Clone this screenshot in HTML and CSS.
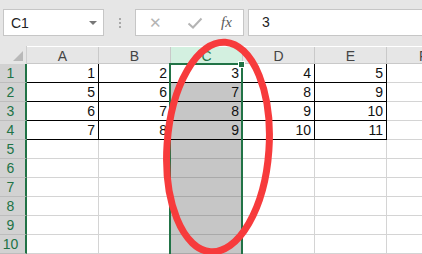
FILE: index.html
```html
<!DOCTYPE html>
<html lang="en">
<head>
    <meta charset="UTF-8">
    <title>Sheet</title>
    <link rel="stylesheet" href="styles.css">
</head>
<body>
    <div class="app">
        <!-- barra de fórmulas -->
        <div class="toolbar">
            <div class="namebox">
                <span>C1</span>
                <span class="arrow"></span>
            </div>
            <div class="dots"><i></i><i></i><i></i></div>
            <div class="fxbox">
                <span class="ico cancel">&#x2715;</span>
                <svg class="ico check" width="16" height="12" viewBox="0 0 16 12"><path d="M1.5 6.5 L6 10.5 L14.5 1.5" fill="none" stroke="#b4b4b4" stroke-width="2"/></svg>
                <span class="ico fx">fx</span>
            </div>
            <div class="formula">3</div>
        </div>

        <div class="sheet">
            <div class="corner"><span class="tri"></span></div>
            <div class="colhead">A</div>
            <div class="colhead">B</div>
            <div class="colhead sel">C</div>
            <div class="colhead">D</div>
            <div class="colhead">E</div>
            <div class="colhead last">F</div>

            <div class="rowhead">1</div>
            <div class="cell b">1</div><div class="cell b">2</div><div class="cell b">3</div><div class="cell b">4</div><div class="cell b">5</div><div class="cell"></div>
            <div class="rowhead">2</div>
            <div class="cell b">5</div><div class="cell b">6</div><div class="cell b g">7</div><div class="cell b">8</div><div class="cell b">9</div><div class="cell"></div>
            <div class="rowhead">3</div>
            <div class="cell b">6</div><div class="cell b">7</div><div class="cell b g">8</div><div class="cell b">9</div><div class="cell b">10</div><div class="cell"></div>
            <div class="rowhead">4</div>
            <div class="cell b">7</div><div class="cell b">8</div><div class="cell b g">9</div><div class="cell b">10</div><div class="cell b">11</div><div class="cell"></div>
            <div class="rowhead">5</div>
            <div class="cell"></div><div class="cell"></div><div class="cell g"></div><div class="cell"></div><div class="cell"></div><div class="cell"></div>
            <div class="rowhead">6</div>
            <div class="cell"></div><div class="cell"></div><div class="cell g"></div><div class="cell"></div><div class="cell"></div><div class="cell"></div>
            <div class="rowhead">7</div>
            <div class="cell"></div><div class="cell"></div><div class="cell g"></div><div class="cell"></div><div class="cell"></div><div class="cell"></div>
            <div class="rowhead">8</div>
            <div class="cell"></div><div class="cell"></div><div class="cell g"></div><div class="cell"></div><div class="cell"></div><div class="cell"></div>
            <div class="rowhead">9</div>
            <div class="cell"></div><div class="cell"></div><div class="cell g"></div><div class="cell"></div><div class="cell"></div><div class="cell"></div>
            <div class="rowhead">10</div>
            <div class="cell"></div><div class="cell"></div><div class="cell g"></div><div class="cell"></div><div class="cell"></div><div class="cell"></div>

            <!-- selección C1:C10 -->
            <div class="selection"><span class="handle"></span></div>
        </div>

        <svg class="mark" width="422" height="254" viewBox="0 0 422 254">
            <ellipse cx="218" cy="147" rx="51" ry="105" fill="none" stroke="#f73b3c" stroke-width="7" transform="rotate(4 218 147)"/>
        </svg>
    </div>
</body>
</html>
```

FILE: styles.css
```css
body {
    margin: 0;
    font-family: "Liberation Sans", Arial, sans-serif;
    background: #e6e6e6;
}

.app {
    position: relative;
    width: 422px;
    height: 254px;
    overflow: hidden;
}

/* barra superior */
.toolbar {
    height: 46px;
    display: flex;
    align-items: flex-start;
    padding: 9px 0 0 3px;
    box-sizing: border-box;
}

.namebox {
    width: 101px;
    height: 27px;
    box-sizing: border-box;
    background: #fff;
    border: 1px solid #c6c6c6;
    display: flex;
    align-items: center;
    justify-content: space-between;
    padding: 0 6px 0 7px;
    font-size: 14px;
    color: #222;
}

.arrow {
    width: 0;
    height: 0;
    border-left: 4px solid transparent;
    border-right: 4px solid transparent;
    border-top: 4px solid #777;
}

.dots {
    width: 31px;
    height: 27px;
    display: flex;
    flex-direction: column;
    align-items: center;
    justify-content: center;
    gap: 2px;
}

.dots i {
    width: 2px;
    height: 2px;
    background: #a8a8a8;
}

.fxbox {
    width: 109px;
    height: 27px;
    box-sizing: border-box;
    background: #fff;
    border: 1px solid #c6c6c6;
    display: flex;
    align-items: center;
    padding-left: 13px;
    gap: 22px;
}

.ico {
    color: #b4b4b4;
}

.cancel {
    font-size: 15px;
    width: 14px;
}

.check {
    margin-left: 2px;
}

.fx {
    font-family: "Liberation Serif", serif;
    font-style: italic;
    font-size: 15px;
    color: #5a5a5a;
    margin-left: -4px;
}

.formula {
    flex: 1;
    height: 27px;
    box-sizing: border-box;
    margin-left: 4px;
    background: #fff;
    border: 1px solid #c6c6c6;
    border-right: none;
    padding-left: 13px;
    line-height: 25px;
    font-size: 14px;
    color: #222;
}

/* hoja */
.sheet {
    position: relative;
    display: grid;
    grid-template-columns: 27px repeat(5, 72px) 1fr;
    grid-template-rows: 18px repeat(10, 19px);
    background: #fff;
}

.corner {
    background: #e6e6e6;
    border-right: 1px solid #cfcfcf;
    position: relative;
}

.tri {
    position: absolute;
    right: 3px;
    bottom: 3px;
    width: 0;
    height: 0;
    border-left: 10px solid transparent;
    border-bottom: 10px solid #b9b9b9;
}

.colhead {
    background: #e6e6e6;
    border-right: 1px solid #c9c9c9;
    border-bottom: 1px solid #c9c9c9;
    text-align: center;
    font-size: 14px;
    line-height: 18px;
    color: #444;
    box-sizing: border-box;
    margin-top: 1px;
}

.colhead.sel {
    background: #d3f0e0;
    color: #217346;
}

.colhead.last {
    border-right: none;
    text-align: left;
    padding-left: 32px;
}

.rowhead {
    background: #d2d2d2;
    border-right: 2px solid #217346;
    border-bottom: 1px solid #bdbdbd;
    color: #217346;
    text-align: center;
    font-size: 14px;
    line-height: 19px;
    padding-right: 4px;
}

.cell {
    border-right: 1px solid #d4d4d4;
    border-bottom: 1px solid #d4d4d4;
    text-align: right;
    padding-right: 3px;
    font-size: 14px;
    line-height: 19px;
    color: #111;
}

.cell.b {
    border-right-color: #000;
    border-bottom-color: #000;
}

.cell.g {
    background: #c6c6c6;
    border-bottom-color: #a9a9a9;
}

.cell.b.g {
    border-bottom-color: #000;
}

.selection {
    position: absolute;
    left: 169px;
    top: 17px;
    width: 70px;
    height: 200px;
    border: 2px solid #217346;
}

.handle {
    position: absolute;
    right: -4px;
    top: -4px;
    width: 5px;
    height: 5px;
    background: #217346;
    border: 1px solid #fff;
}

.mark {
    position: absolute;
    left: 0;
    top: 0;
}
```
